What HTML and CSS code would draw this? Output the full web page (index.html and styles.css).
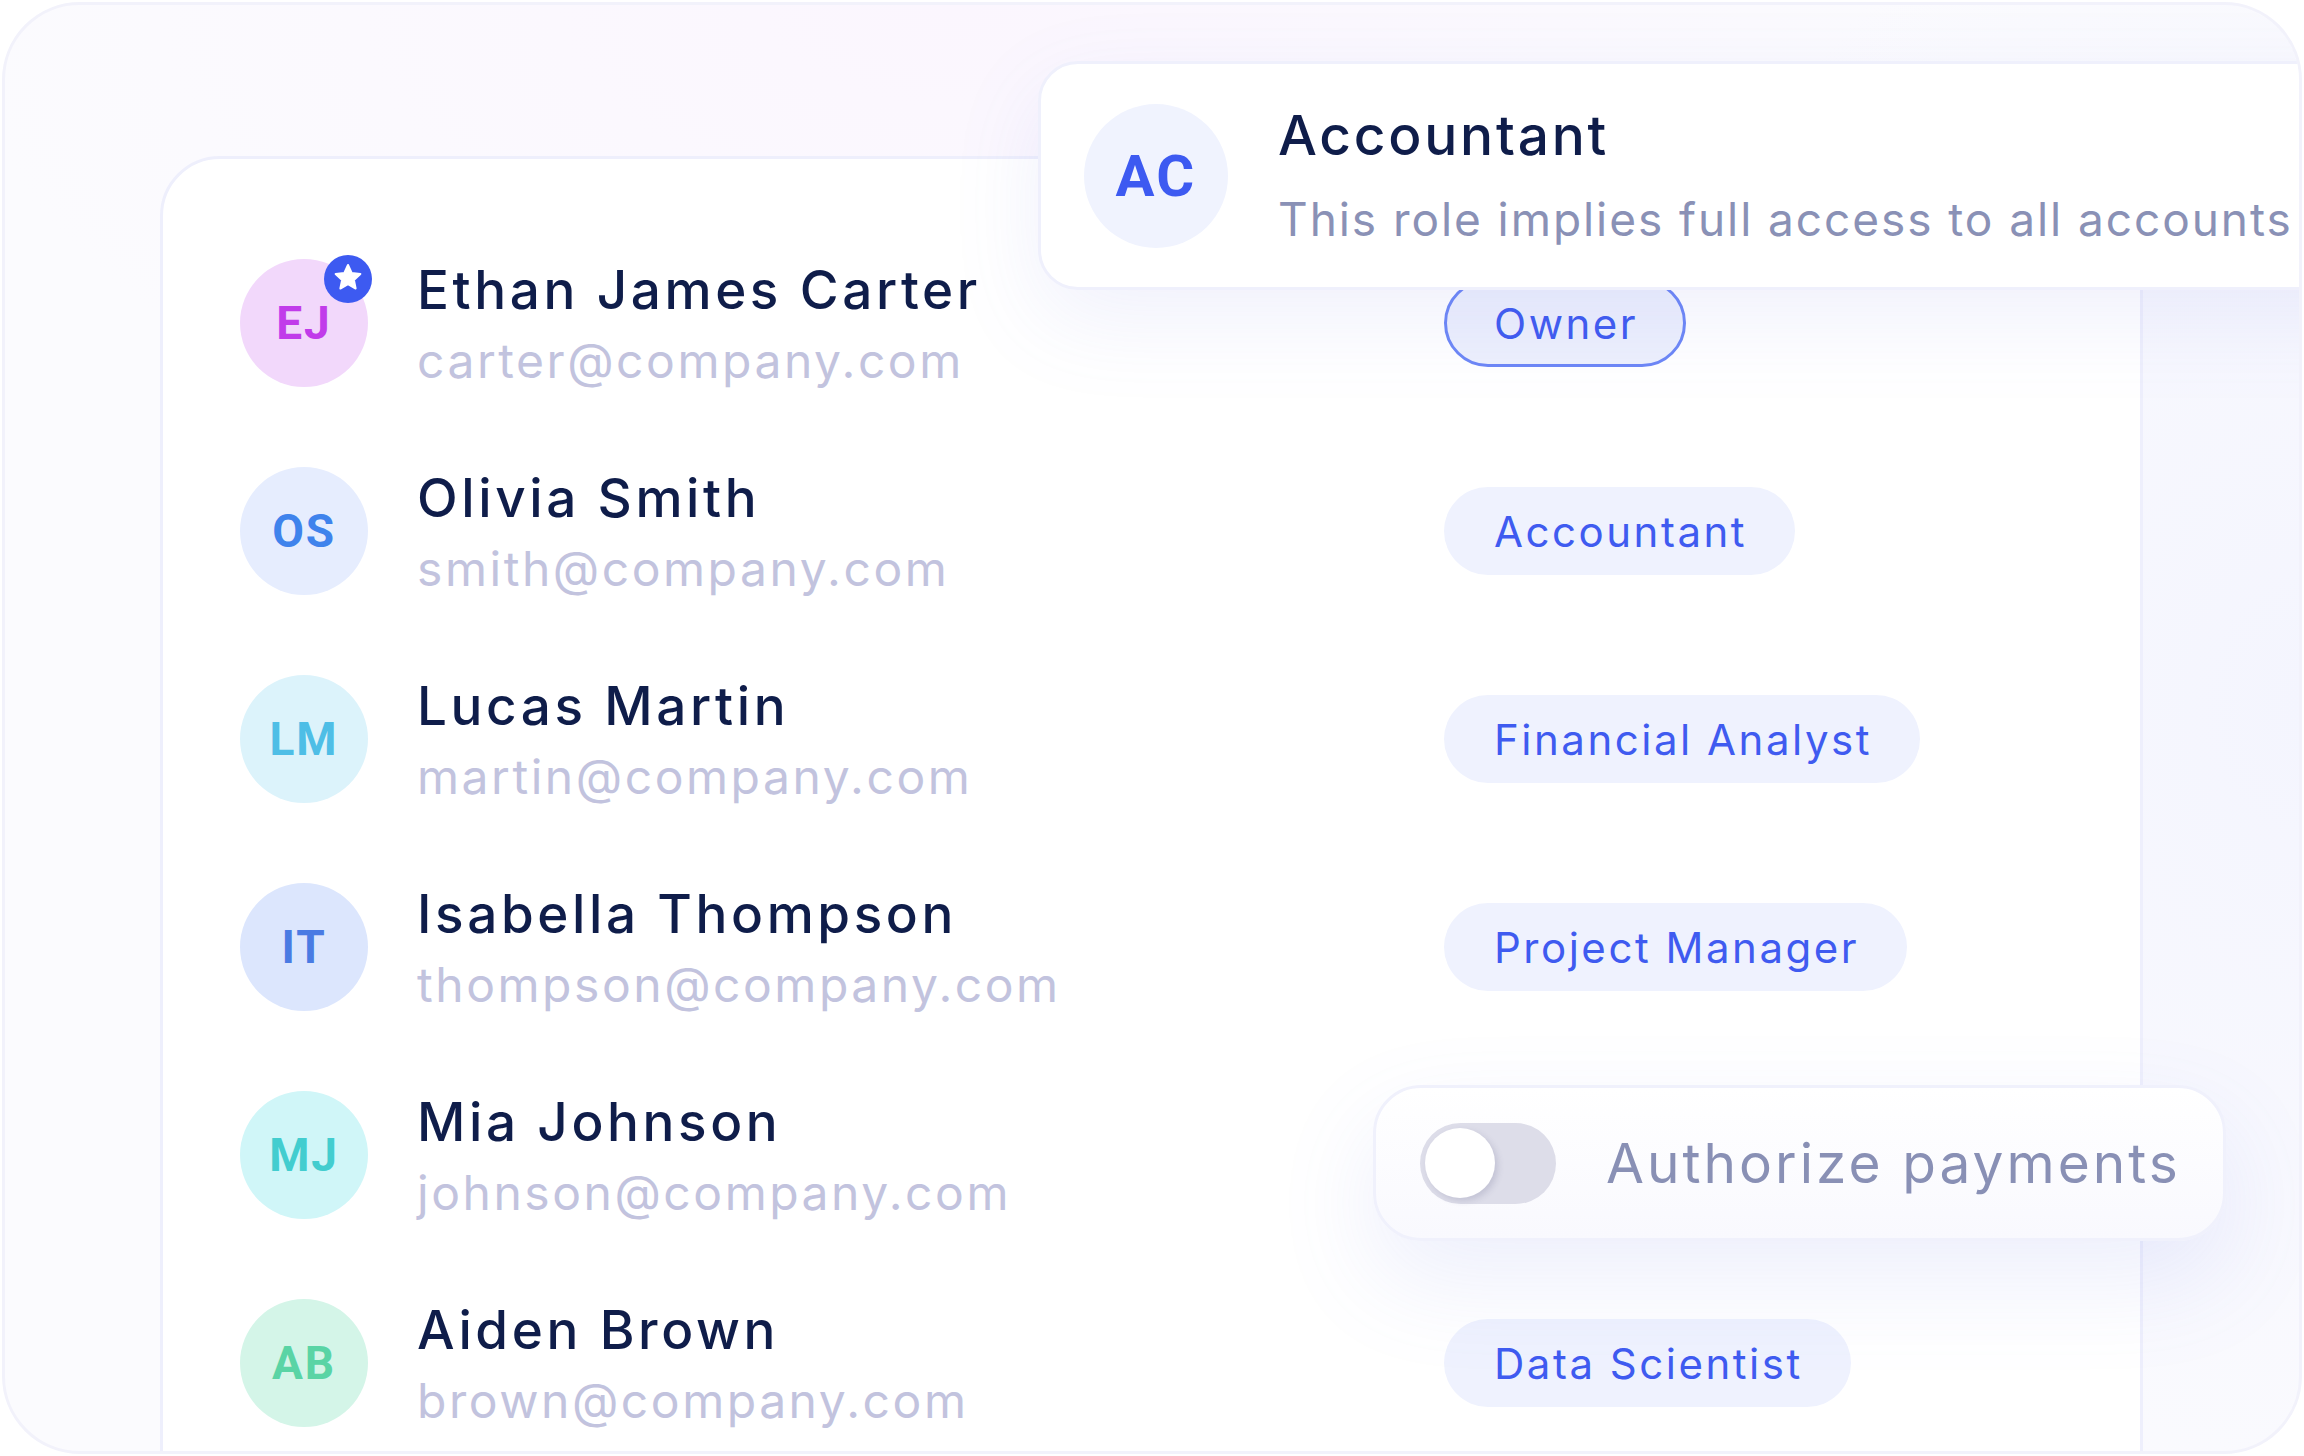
FILE: index.html
```html
<!DOCTYPE html>
<html lang="en">
<head>
<meta charset="utf-8">
<title>Team roles</title>
<link rel="stylesheet" href="styles.css">
</head>
<body>
<div class="frame">
  <div class="members">
    <div class="row">
      <div class="avatar av-ej">EJ
        <span class="badge">
          <svg viewBox="0 0 48 48" width="48" height="48">
            <circle cx="24" cy="24" r="24" fill="#3D5AF1"/>
            <polygon points="24,10 27.65,17.98 36.36,18.98 29.9,24.92 31.64,33.52 24,29.2 16.36,33.52 18.1,24.92 11.64,18.98 20.35,17.98" fill="#fff" stroke="#fff" stroke-width="2" stroke-linejoin="round"/>
          </svg>
        </span>
      </div>
      <div class="info"><div class="name">Ethan James Carter</div><div class="email">carter@company.com</div></div>
      <span class="pill pill-owner">Owner</span>
    </div>
    <div class="row">
      <div class="avatar av-os">OS</div>
      <div class="info"><div class="name">Olivia Smith</div><div class="email">smith@company.com</div></div>
      <span class="pill">Accountant</span>
    </div>
    <div class="row">
      <div class="avatar av-lm">LM</div>
      <div class="info"><div class="name">Lucas Martin</div><div class="email">martin@company.com</div></div>
      <span class="pill">Financial Analyst</span>
    </div>
    <div class="row">
      <div class="avatar av-it">IT</div>
      <div class="info"><div class="name">Isabella Thompson</div><div class="email">thompson@company.com</div></div>
      <span class="pill">Project Manager</span>
    </div>
    <div class="row">
      <div class="avatar av-mj">MJ</div>
      <div class="info"><div class="name">Mia Johnson</div><div class="email">johnson@company.com</div></div>
    </div>
    <div class="row">
      <div class="avatar av-ab">AB</div>
      <div class="info"><div class="name">Aiden Brown</div><div class="email">brown@company.com</div></div>
      <span class="pill">Data Scientist</span>
    </div>
  </div>

  <div class="role-card">
    <div class="role-avatar">AC</div>
    <div class="role-text">
      <div class="role-title">Accountant</div>
      <div class="role-desc">This role implies full access to all accounts</div>
    </div>
  </div>

  <div class="toggle-card">
    <span class="switch"><span class="knob"></span></span>
    <span class="toggle-label">Authorize payments</span>
  </div>
</div>
</body>
</html>
```
FILE: styles.css
```css
html, body {
  margin: 0;
  padding: 0;
}
body {
  width: 2304px;
  height: 1456px;
  overflow: hidden;
  background: #ffffff;
  font-family: Inter, "DejaVu Sans", sans-serif;
}

.frame {
  position: relative;
  box-sizing: border-box;
  width: 2300px;
  height: 1452px;
  margin: 2px;
  border: 3px solid #F2F2FB;
  border-radius: 78px;
  overflow: hidden;
  padding: 151px 0 0 155px;
  background:
    radial-gradient(ellipse 1000px 520px at 950px 0px, rgba(251, 246, 254, 1) 0%, rgba(251, 246, 254, 0) 100%),
    radial-gradient(ellipse 700px 900px at 2300px 700px, rgba(244, 245, 254, 1) 0%, rgba(244, 245, 254, 0) 100%),
    #FBFBFE;
}

.members {
  box-sizing: border-box;
  width: 1983px;
  height: 1400px;
  border: 3px solid #EEEFFC;
  border-radius: 60px;
  background: #ffffff;
  padding: 60px 0 0 77px;
}

.row {
  display: flex;
  align-items: center;
  height: 208px;
}

.avatar {
  position: relative;
  flex: none;
  width: 128px;
  height: 128px;
  margin-right: 49px;
  border-radius: 50%;
  display: flex;
  align-items: center;
  justify-content: center;
  font-family: Roboto, Inter, sans-serif;
  font-weight: 700;
  font-size: 46px;
  letter-spacing: 0.04em;
}
.av-ej { background: #F2D8FB; color: #C13BEA; }
.av-os { background: #E6EDFE; color: #3F83EC; }
.av-lm { background: #DCF3FB; color: #4EBEE6; }
.av-it { background: #DCE6FD; color: #4A7BE3; }
.av-mj { background: #D0F6F8; color: #43CDCF; }
.av-ab { background: #D4F5E8; color: #5AD4A5; }

.badge {
  position: absolute;
  left: 84px;
  top: -4px;
  width: 48px;
  height: 48px;
}
.badge svg { display: block; }

.info {
  flex: none;
  width: 1027px;
  padding-top: 4px;
}
.name {
  font-size: 53px;
  line-height: 64px;
  font-weight: 500;
  color: #0F1D4A;
  letter-spacing: 0.068em;
  white-space: nowrap;
}
.email {
  margin-top: 7px;
  font-size: 48px;
  line-height: 64px;
  font-weight: 400;
  color: #C2C3DE;
  letter-spacing: 0.053em;
  white-space: nowrap;
}

.pill {
  box-sizing: border-box;
  height: 88px;
  padding: 0 48px 0 50px;
  border-radius: 44px;
  background: #EFF2FE;
  color: #3F5BF0;
  font-size: 42px;
  letter-spacing: 0.06em;
  display: flex;
  align-items: center;
  white-space: nowrap;
}
.pill-owner {
  border: 3px solid #6D87F6;
  padding: 0 45px 0 47px;
  background: #EDF0FD;
}

.role-card {
  position: absolute;
  z-index: 2;
  left: 1033px;
  top: 56px;
  width: 1400px;
  height: 229px;
  box-sizing: border-box;
  border: 3px solid #EFF0FC;
  border-radius: 40px;
  background: #ffffff;
  display: flex;
  align-items: center;
  padding-left: 43px;
  box-shadow: 0 30px 90px rgba(110, 120, 230, 0.10);
}
.role-avatar {
  flex: none;
  width: 144px;
  height: 144px;
  margin-right: 50px;
  border-radius: 50%;
  background: #F0F3FE;
  color: #3D5AF1;
  display: flex;
  align-items: center;
  justify-content: center;
  font-family: Roboto, Inter, sans-serif;
  font-weight: 700;
  font-size: 58px;
  letter-spacing: 0.04em;
}
.role-text {
  padding-bottom: 1px;
}
.role-title {
  font-size: 55px;
  line-height: 66px;
  font-weight: 500;
  color: #0F1D4A;
  letter-spacing: 0.05em;
  white-space: nowrap;
}
.role-desc {
  margin-top: 21px;
  font-size: 46px;
  line-height: 60px;
  color: #8A91B6;
  letter-spacing: 0.042em;
  white-space: nowrap;
}

.toggle-card {
  position: absolute;
  z-index: 2;
  left: 1368px;
  top: 1080px;
  width: 853px;
  height: 156px;
  box-sizing: border-box;
  border: 3px solid #F0F1FC;
  border-radius: 48px;
  background: linear-gradient(180deg, #ffffff 0%, #F9F9FE 100%);
  display: flex;
  align-items: center;
  padding-left: 44px;
  box-shadow: 0 40px 100px rgba(110, 120, 230, 0.12);
}
.switch {
  flex: none;
  box-sizing: border-box;
  width: 136px;
  height: 81px;
  margin-right: 50px;
  padding-left: 5px;
  border-radius: 41px;
  background: #DDDDE9;
  display: flex;
  align-items: center;
}
.knob {
  width: 70px;
  height: 70px;
  border-radius: 50%;
  background: #ffffff;
  box-shadow: 3px 3px 6px rgba(80, 80, 120, 0.18);
}
.toggle-label {
  font-size: 55px;
  color: #8990B5;
  letter-spacing: 0.055em;
  white-space: nowrap;
}
```
